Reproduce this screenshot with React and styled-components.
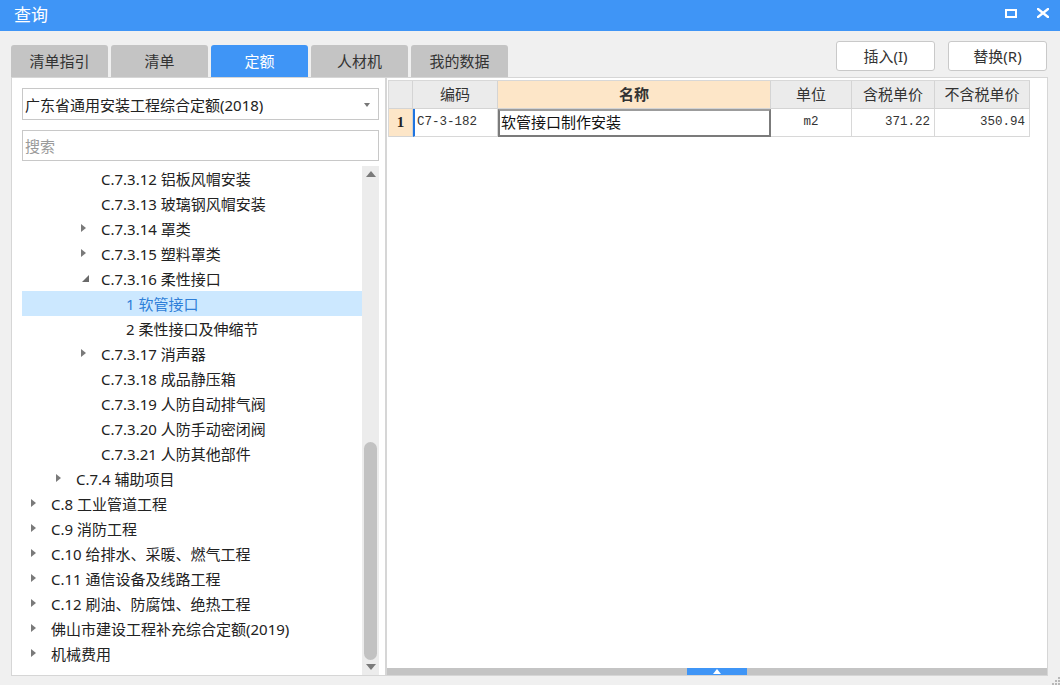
import styled, { createGlobalStyle } from "styled-components";

const GlobalStyle = createGlobalStyle`
  html, body {
    margin: 0;
    padding: 0;
    background: #f0f0f0;
  }
  * {
    box-sizing: border-box;
  }
`;

const UI_FONT = `"Noto Sans", "Noto Sans CJK SC", sans-serif`;

const tabs = ["清单指引", "清单", "定额", "人材机", "我的数据"];

const treeRows = [
  { level: 2, text: "C.7.3.12 铝板风帽安装" },
  { level: 2, text: "C.7.3.13 玻璃钢风帽安装" },
  { level: 2, arrow: "closed", text: "C.7.3.14 罩类" },
  { level: 2, arrow: "closed", text: "C.7.3.15 塑料罩类" },
  { level: 2, arrow: "open", text: "C.7.3.16 柔性接口" },
  { level: 3, text: "1 软管接口", selected: true },
  { level: 3, text: "2 柔性接口及伸缩节" },
  { level: 2, arrow: "closed", text: "C.7.3.17 消声器" },
  { level: 2, text: "C.7.3.18 成品静压箱" },
  { level: 2, text: "C.7.3.19 人防自动排气阀" },
  { level: 2, text: "C.7.3.20 人防手动密闭阀" },
  { level: 2, text: "C.7.3.21 人防其他部件" },
  { level: 1, arrow: "closed", text: "C.7.4 辅助项目" },
  { level: 0, arrow: "closed", text: "C.8 工业管道工程" },
  { level: 0, arrow: "closed", text: "C.9 消防工程" },
  { level: 0, arrow: "closed", text: "C.10 给排水、采暖、燃气工程" },
  { level: 0, arrow: "closed", text: "C.11 通信设备及线路工程" },
  { level: 0, arrow: "closed", text: "C.12 刷油、防腐蚀、绝热工程" },
  { level: 0, arrow: "closed", text: "佛山市建设工程补充综合定额(2019)" },
  { level: 0, arrow: "closed", text: "机械费用" },
];

const columns = [
  { key: "no", title: "", width: 24 },
  { key: "code", title: "编码", width: 85 },
  { key: "name", title: "名称", width: 273, hot: true },
  { key: "unit", title: "单位", width: 81 },
  { key: "tax", title: "含税单价", width: 83 },
  { key: "notax", title: "不含税单价", width: 95 },
];

const App = () => {
  return (
    <>
      <GlobalStyle />
      <Window>
        <TitleBar>
          <Title>查询</Title>
          <WinControls>
            <svg width="12" height="9" viewBox="0 0 12 9">
              <rect x="1" y="1" width="10" height="7" fill="none" stroke="#fff" strokeWidth="2" />
            </svg>
            <svg width="12" height="10" viewBox="0 0 12 10">
              <path d="M1 1 L11 9 M11 1 L1 9" stroke="#fff" strokeWidth="2.4" strokeLinecap="square" />
            </svg>
          </WinControls>
        </TitleBar>

        <Body>
          <TopRow>
            <TabBar>
              {tabs.map((t) => (
                <Tab key={t} $active={t === "定额"}>
                  {t}
                </Tab>
              ))}
            </TabBar>
            <ActionGroup>
              <ActionButton>插入(I)</ActionButton>
              <ActionButton>替换(R)</ActionButton>
            </ActionGroup>
          </TopRow>

          <Main>
            <LeftPanel>
              <Combo>
                <ComboText>广东省通用安装工程综合定额(2018)</ComboText>
                <ComboArrow />
              </Combo>
              <SearchBox>搜索</SearchBox>
              <Tree>
                <TreeList>
                  {treeRows.map((r) => (
                    <TreeRow key={r.text} $level={r.level} $selected={r.selected}>
                      <Expander>
                        {r.arrow === "closed" && (
                          <svg width="5" height="8" viewBox="0 0 5 8">
                            <path d="M0 0 L5 4 L0 8 Z" fill="#7a7a7a" />
                          </svg>
                        )}
                        {r.arrow === "open" && (
                          <svg width="8" height="8" viewBox="0 0 8 8">
                            <path d="M8 1 L8 8 L1 8 Z" fill="#6a6a6a" />
                          </svg>
                        )}
                      </Expander>
                      <span>{r.text}</span>
                    </TreeRow>
                  ))}
                </TreeList>
                <VScroll>
                  <ScrollBtn>
                    <svg width="10" height="6" viewBox="0 0 10 6">
                      <path d="M0 6 L5 0 L10 6 Z" fill="#7a7a7a" />
                    </svg>
                  </ScrollBtn>
                  <ScrollTrack>
                    <ScrollThumb $offset={276} $size={218} />
                  </ScrollTrack>
                  <ScrollBtn>
                    <svg width="10" height="6" viewBox="0 0 10 6">
                      <path d="M0 0 L5 6 L10 0 Z" fill="#7a7a7a" />
                    </svg>
                  </ScrollBtn>
                </VScroll>
              </Tree>
            </LeftPanel>

            <RightPanel>
              <Grid>
                {columns.map((c) => (
                  <HeadCell key={c.key} $hot={c.hot}>
                    {c.title}
                  </HeadCell>
                ))}
                <RowNo>1</RowNo>
                <Cell $mono $current>C7-3-182</Cell>
                <NameCell>软管接口制作安装</NameCell>
                <Cell $mono $align="center">m2</Cell>
                <Cell $mono $align="right">371.22</Cell>
                <Cell $mono $align="right">350.94</Cell>
              </Grid>
              <Blank />
              <HScroll>
                <HThumb>
                  <svg width="8" height="5" viewBox="0 0 8 5">
                    <path d="M0 5 L4 0 L8 5 Z" fill="#fff" />
                  </svg>
                </HThumb>
              </HScroll>
            </RightPanel>
          </Main>
          <Footer>
            <Grip>
              <svg width="8" height="8" viewBox="0 0 8 8">
                <rect x="6" y="0" width="2" height="2" fill="#b8b8b8" />
                <rect x="3" y="3" width="2" height="2" fill="#b8b8b8" />
                <rect x="6" y="3" width="2" height="2" fill="#b8b8b8" />
                <rect x="0" y="6" width="2" height="2" fill="#b8b8b8" />
                <rect x="3" y="6" width="2" height="2" fill="#b8b8b8" />
                <rect x="6" y="6" width="2" height="2" fill="#b8b8b8" />
              </svg>
            </Grip>
          </Footer>
        </Body>
      </Window>
    </>
  );
};

const Window = styled.div`
  width: 1060px;
  height: 685px;
  display: flex;
  flex-direction: column;
  overflow: hidden;
  background: #f0f0f0;
  font-family: ${UI_FONT};
`;

const TitleBar = styled.div`
  height: 31px;
  flex-shrink: 0;
  background: #3f95f6;
  display: flex;
  align-items: center;
  justify-content: space-between;
  padding: 0 11px 0 14px;
`;

const Title = styled.div`
  color: #fff;
  font-size: 17px;
  line-height: 20px;
  margin-top: -1px;
`;

const WinControls = styled.div`
  display: flex;
  align-items: center;
  gap: 20px;
  margin-top: -5px;
`;

const Body = styled.div`
  flex: 1;
  display: flex;
  flex-direction: column;
  padding: 0 12px 0 11px;
`;

const TopRow = styled.div`
  height: 46px;
  flex-shrink: 0;
  display: flex;
  justify-content: space-between;
  align-items: flex-start;
`;

const TabBar = styled.div`
  display: flex;
  gap: 3px;
  margin-top: 14px;
`;

const Tab = styled.div`
  width: 97px;
  height: 32px;
  border-radius: 3px 3px 0 0;
  background: ${(p) => (p.$active ? "#3f95f6" : "#c4c4c4")};
  color: ${(p) => (p.$active ? "#fff" : "#333")};
  font-size: 15px;
  display: flex;
  align-items: center;
  justify-content: center;
  padding-bottom: 1px;
`;

const ActionGroup = styled.div`
  display: flex;
  gap: 13px;
  margin-top: 10px;
  margin-right: 1px;
`;

const ActionButton = styled.div`
  width: 99px;
  height: 30px;
  background: #fff;
  border: 1px solid #c9c9c9;
  border-radius: 3px;
  color: #333;
  font-size: 15px;
  display: flex;
  align-items: center;
  justify-content: center;
  padding-bottom: 2px;
`;

const Main = styled.div`
  height: 599px;
  display: flex;
`;

const LeftPanel = styled.div`
  width: 375px;
  background: #fff;
  border: 1px solid #d6d6d6;
  display: flex;
  flex-direction: column;
  padding: 10px 6px 0 10px;
`;

const Combo = styled.div`
  height: 32px;
  border: 1px solid #c8c8c8;
  display: flex;
  align-items: center;
  justify-content: space-between;
  padding: 0 8px 0 2px;
`;

const ComboText = styled.span`
  font-size: 15px;
  color: #222;
`;

const ComboArrow = styled.span`
  width: 0;
  height: 0;
  border-left: 3px solid transparent;
  border-right: 3px solid transparent;
  border-top: 4px solid #777;
  margin-top: 1px;
`;

const SearchBox = styled.div`
  height: 31px;
  margin-top: 10px;
  border: 1px solid #c8c8c8;
  padding: 0 2px;
  display: flex;
  align-items: center;
  font-size: 15px;
  color: #9a9a9a;
`;

const Tree = styled.div`
  margin-top: 5px;
  flex: 1;
  display: flex;
  overflow: hidden;
`;

const TreeList = styled.div`
  flex: 1;
  display: flex;
  flex-direction: column;
`;

const TreeRow = styled.div`
  height: 25px;
  flex-shrink: 0;
  display: flex;
  align-items: center;
  padding-left: ${(p) => 9 + p.$level * 25}px;
  padding-bottom: 1px;
  background: ${(p) => (p.$selected ? "#cce8ff" : "transparent")};
  color: ${(p) => (p.$selected ? "#2f7fd8" : "#222")};
  font-size: 15px;
  white-space: nowrap;
`;

const Expander = styled.span`
  width: 20px;
  height: 24px;
  flex-shrink: 0;
  display: flex;
  align-items: center;
`;

const VScroll = styled.div`
  width: 17px;
  background: #ececec;
  display: flex;
  flex-direction: column;
  align-items: center;
`;

const ScrollBtn = styled.div`
  height: 16px;
  width: 100%;
  display: flex;
  align-items: center;
  justify-content: center;
`;

const ScrollTrack = styled.div`
  flex: 1;
  width: 100%;
  display: flex;
  flex-direction: column;
  align-items: center;
`;

const ScrollThumb = styled.div`
  width: 13px;
  margin-top: ${(p) => p.$offset - 16}px;
  height: ${(p) => p.$size}px;
  border-radius: 7px;
  background: #c2c2c2;
`;

const RightPanel = styled.div`
  flex: 1;
  background: #fff;
  border: 1px solid #d6d6d6;
  display: flex;
  flex-direction: column;
  padding: 2px 0 0 1px;
`;

const Grid = styled.div`
  display: grid;
  grid-template-columns: ${columns.map((c) => c.width + "px").join(" ")};
  grid-auto-rows: 28px;
  border-left: 1px solid #d8d8d8;
  border-top: 1px solid #d8d8d8;
  width: max-content;
`;

const HeadCell = styled.div`
  background: ${(p) => (p.$hot ? "#fde6c8" : "#ebebeb")};
  border-right: 1px solid #d4d4d4;
  border-bottom: 1px solid #d4d4d4;
  color: #333;
  font-size: 15px;
  font-weight: ${(p) => (p.$hot ? 700 : 400)};
  display: flex;
  align-items: center;
  justify-content: center;
  padding-bottom: 3px;
`;

const RowNo = styled.div`
  background: #fde6c8;
  border-right: 1px solid #d4d4d4;
  border-bottom: 1px solid #d4d4d4;
  font-family: "Liberation Serif", serif;
  font-weight: 700;
  font-size: 15px;
  color: #222;
  display: flex;
  align-items: center;
  justify-content: center;
  padding-bottom: 1px;
`;

const Cell = styled.div`
  border-right: 1px solid #d8d8d8;
  border-bottom: 1px solid #d8d8d8;
  border-left: ${(p) => (p.$current ? "2px solid #1f74e0" : "none")};
  font-family: ${(p) => (p.$mono ? `"Liberation Mono", monospace` : UI_FONT)};
  font-size: 12.5px;
  color: #333;
  display: flex;
  align-items: center;
  justify-content: ${(p) =>
    p.$align === "right" ? "flex-end" : p.$align === "center" ? "center" : "flex-start"};
  padding: 0 4px 1px ${(p) => (p.$current ? 2 : 4)}px;
`;

const NameCell = styled.div`
  border: 2px solid #7b7b7b;
  border-top-color: #9c9c9c;
  font-size: 15px;
  color: #111;
  display: flex;
  align-items: center;
  padding: 0 0 4px 1px;
`;

const Blank = styled.div`
  flex: 1;
`;

const HScroll = styled.div`
  height: 7px;
  margin: 0 0 0 -1px;
  background: #c4c4c4;
  display: flex;
  justify-content: center;
`;

const HThumb = styled.div`
  width: 60px;
  height: 100%;
  background: #3f95f6;
  display: flex;
  align-items: center;
  justify-content: center;
`;

const Footer = styled.div`
  flex: 1;
  display: flex;
  justify-content: flex-end;
  align-items: flex-end;
  margin-right: -12px;
`;

const Grip = styled.div`
  width: 8px;
  height: 8px;
  display: flex;
`;

export default App;
